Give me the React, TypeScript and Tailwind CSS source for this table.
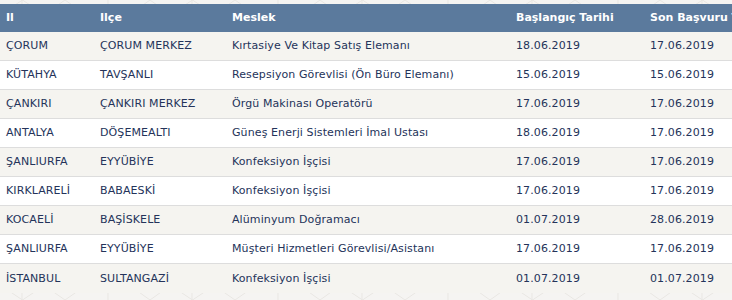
import React from "react";

const rows = [
  ["ÇORUM", "ÇORUM MERKEZ", "Kırtasiye Ve Kitap Satış Elemanı", "18.06.2019", "17.06.2019"],
  ["KÜTAHYA", "TAVŞANLI", "Resepsiyon Görevlisi (Ön Büro Elemanı)", "15.06.2019", "15.06.2019"],
  ["ÇANKIRI", "ÇANKIRI MERKEZ", "Örgü Makinası Operatörü", "17.06.2019", "17.06.2019"],
  ["ANTALYA", "DÖŞEMEALTI", "Güneş Enerji Sistemleri İmal Ustası", "18.06.2019", "17.06.2019"],
  ["ŞANLIURFA", "EYYÜBİYE", "Konfeksiyon İşçisi", "17.06.2019", "17.06.2019"],
  ["KIRKLARELİ", "BABAESKİ", "Konfeksiyon İşçisi", "17.06.2019", "17.06.2019"],
  ["KOCAELİ", "BAŞİSKELE", "Alüminyum Doğramacı", "01.07.2019", "28.06.2019"],
  ["ŞANLIURFA", "EYYÜBİYE", "Müşteri Hizmetleri Görevlisi/Asistanı", "17.06.2019", "17.06.2019"],
  ["İSTANBUL", "SULTANGAZİ", "Konfeksiyon İşçisi", "01.07.2019", "01.07.2019"],
];

const widths = ["w-[94px]", "w-[132px]", "w-[284px]", "w-[134px]", "w-[150px]"];

function Pattern() {
  return (
    <svg className="absolute inset-0 h-full w-full" aria-hidden="true">
      <defs>
        <pattern id="p" width="170" height="60" patternUnits="userSpaceOnUse" x="-20" y="-30">
          <g fill="none" stroke="#e9e7e3" strokeWidth="1">
            <path d="M0 30 L42 0 L85 30 L128 0 L170 30" />
            <path d="M0 30 L42 60 L85 30 L128 60 L170 30" />
            <path d="M42 0 L42 60 M128 0 L128 60" />
            <path d="M20 15 L65 45 M65 15 L20 45" />
          </g>
        </pattern>
      </defs>
      <rect width="100%" height="100%" fill="#f5f4f2" />
      <rect width="100%" height="100%" fill="url(#p)" />
    </svg>
  );
}

export default function App() {
  return (
    <div
      className="relative h-[300px] w-[732px] overflow-hidden"
      style={{ fontFamily: '"DejaVu Sans", Verdana, sans-serif' }}
    >
      <Pattern />
      <div className="relative pt-[4px]">
        <div className="w-[794px]">
          <div className="flex h-[28px] items-center bg-[#5b7a9d] text-[11px] font-bold text-white">
            {["Il", "Ilçe", "Meslek", "Başlangıç Tarihi", "Son Başvuru Tarihi"].map((h, i) => (
              <div key={i} className={`${widths[i]} shrink-0 whitespace-nowrap pl-[6px]`}>
                {h}
              </div>
            ))}
          </div>
          {rows.map((r, ri) => (
            <div
              key={ri}
              className={`flex h-[29px] items-center pt-[1px] text-[11px] tracking-[0.1px] text-[#24335a] ${
                ri % 2 === 0 ? "bg-[#f5f4f0]" : "bg-white"
              } ${ri < rows.length - 1 ? "border-b border-[#dddddd]" : ""}`}
            >
              {r.map((c, ci) => (
                <div key={ci} className={`${widths[ci]} shrink-0 whitespace-nowrap pl-[6px]`}>
                  {c}
                </div>
              ))}
            </div>
          ))}
        </div>
      </div>
    </div>
  );
}
